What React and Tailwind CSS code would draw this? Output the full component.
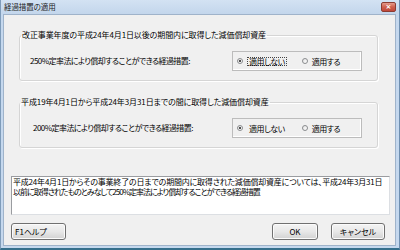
import React from "react";

function Radio({ checked }) {
  return (
    <div className="w-[6px] h-[6px] rounded-full border border-[#8a8c8e] bg-gradient-to-br from-[#e4e4e4] to-[#ffffff] flex items-center justify-center shrink-0">
      {checked && <div className="w-[2px] h-[2px] rounded-full bg-[#1a1a1a]" />}
    </div>
  );
}

function RadioBox({ focus }) {
  return (
    <div className="w-[130px] h-[20px] border border-[#bcbcbc] shadow-[inset_-1px_-1px_0_#ffffff] flex items-center pl-[4px] shrink-0 whitespace-nowrap">
      <Radio checked />
      <div
        className={
          "ml-[4px] h-[9px] flex items-center px-[1px] leading-[9px] tracking-[-0.5px] " +
          (focus ? "border border-dotted border-[#444]" : "border border-transparent")
        }
      >
        適用しない
      </div>
      <div className="ml-[15px]">
        <Radio />
      </div>
      <div className="ml-[4px] leading-[9px] tracking-[-0.5px]">適用する</div>
    </div>
  );
}

function Group({ label, text, padL, legendMl, mt, focus }) {
  return (
    <fieldset
      className={
        "w-[359px] ml-[15px] border border-[#d5d5d5] rounded-[3px] shadow-[inset_1px_1px_0_#ffffff,1px_1px_0_#ffffff] " +
        mt
      }
    >
      <legend className={"px-[1px] leading-[10px] tracking-[-0.1px] whitespace-nowrap " + legendMl}>{label}</legend>
      <div className={"flex items-center pt-[11px] pb-[9px] pr-[15px] " + padL}>
        <div className="flex-1 whitespace-nowrap tracking-[-0.55px]">{text}</div>
        <RadioBox focus={focus} />
      </div>
    </fieldset>
  );
}

function Btn({ children, w, align }) {
  return (
    <div
      className={
        "h-[17px] border border-[#707070] rounded-[3px] bg-gradient-to-b from-[#f4f4f4] via-[#e8e8e8] to-[#d2d2d2] shadow-[inset_0_0_0_1px_#fbfbfb] flex items-center leading-[10px] whitespace-nowrap " +
        w +
        " " +
        align
      }
    >
      {children}
    </div>
  );
}

export default function App() {
  return (
    <div className="w-[400px] h-[250px] flex flex-col bg-[#c5d8ee] border-l border-r border-b-2 border-l-[#7f9cba] border-r-[#6f8fb0] border-b-[#356f8c] text-[8px] text-black font-['Noto_Sans_CJK_JP',sans-serif] [font-feature-settings:'palt'] overflow-hidden">
      <div className="h-[14px] shrink-0 flex items-center pl-[3px] pr-[3px] bg-gradient-to-b from-[#d3e2f3] to-[#c3d6ec]">
        <div className="flex-1 text-[7.5px] leading-[10px] text-[#1b1b1b] tracking-[-0.1px]">経過措置の適用</div>
        <div className="w-[15px] h-[10px] rounded-[2px] border border-[#8b3b31] bg-gradient-to-b from-[#e3998b] via-[#cf5f4d] to-[#c0473a] flex items-center justify-center text-white text-[7px] leading-[7px] font-bold font-['DejaVu_Sans',sans-serif]">
          ×
        </div>
      </div>
      <div className="flex-1 ml-[2px] mr-[3px] mb-[2px] bg-[#f0f0f0] border border-[#9fb3ca] flex flex-col">
        <Group
          label="改正事業年度の平成24年4月1日以後の期間内に取得した減価償却資産"
          text="250%定率法により償却することができる経過措置:"
          padL="pl-[10px]"
          legendMl="ml-[1px]"
          mt="mt-[15px]"
          focus
        />
        <Group
          label="平成19年4月1日から平成24年3月31日までの間に取得した減価償却資産"
          text="200%定率法により償却することができる経過措置:"
          padL="pl-[13px]"
          legendMl="ml-0"
          mt="mt-[16px]"
        />
        <div className="mt-[28px] ml-[7px] w-[379px] h-[39px] bg-white border border-[#9a9ca0] border-b-[#dcdfe3] border-r-[#dcdfe3] pl-[1px] leading-[9.5px] whitespace-nowrap">
          <div className="tracking-[-0.2px]">平成24年4月1日からその事業終了の日までの期間内に取得された減価償却資産については、平成24年3月31日</div>
          <div className="tracking-[-1px]">以前に取得されたものとみなして250%定率法により償却することができる経過措置</div>
        </div>
        <div className="mt-[8px] flex items-center">
          <div className="ml-[7px]">
            <Btn w="w-[55px]" align="pl-[3px]">F1ヘルプ</Btn>
          </div>
          <div className="ml-auto">
            <Btn w="w-[46px]" align="justify-center">OK</Btn>
          </div>
          <div className="ml-[13px] mr-[10px]">
            <Btn w="w-[54px]" align="justify-center">キャンセル</Btn>
          </div>
        </div>
      </div>
    </div>
  );
}
